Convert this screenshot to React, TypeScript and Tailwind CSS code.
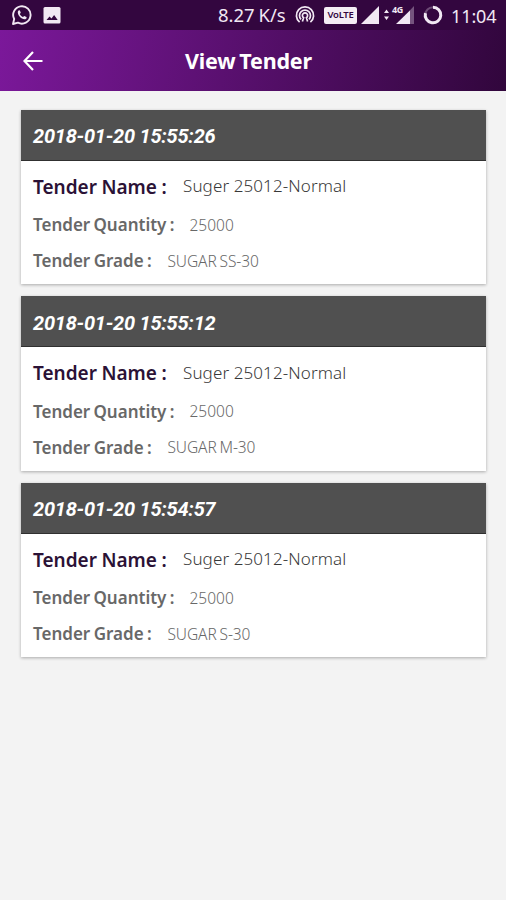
interface Tender {
  date: string;
  name: string;
  quantity: string;
  grade: string;
}

const tenders: Tender[] = [
  { date: '2018-01-20 15:55:26', name: 'Suger 25012-Normal', quantity: '25000', grade: 'SUGAR SS-30' },
  { date: '2018-01-20 15:55:12', name: 'Suger 25012-Normal', quantity: '25000', grade: 'SUGAR M-30' },
  { date: '2018-01-20 15:54:57', name: 'Suger 25012-Normal', quantity: '25000', grade: 'SUGAR S-30' },
];

function StatusBar() {
  return (
    <div className="flex h-[30px] items-center bg-[#33063f] pl-3 pr-[9px] text-[#f1e8f3]">
      <svg className="h-5 w-5" viewBox="0 0 20 20" fill="none">
        <path d="M1 19l1.2-5A8.7 8.7 0 1 1 6 17.7z" stroke="currentColor" strokeWidth="1.9" strokeLinejoin="round" />
        <path
          d="M7.2 5.3c-.9.2-1.5 1.1-1.4 2.1.3 3.4 3.5 6.5 6.7 6.8 1.1.1 2-.5 2.1-1.5l-.1-.7-2.3-1.1-1.2 1.2c-1.5-.6-2.6-1.7-3.2-3.1l1-1.2-.9-2.4z"
          fill="currentColor"
        />
      </svg>
      <svg className="ml-[11px] h-[18px] w-[18px]" viewBox="0 0 18 18">
        <rect x=".5" y="1" width="17" height="16.5" rx="1.5" fill="currentColor" />
        <path d="M3.5 14l3-3.6 2 2 2.6-3.4 3.6 5z" fill="#33063f" />
      </svg>

      <span className="ml-auto w-[68px] whitespace-nowrap pt-px text-[18.5px] leading-none [word-spacing:-1px]">8.27 K/s</span>
      <svg className="ml-[9px] h-5 w-5" viewBox="0 0 20 20" fill="none" stroke="currentColor" strokeWidth="1.7">
        <path d="M4.6 17.2a8.6 8.6 0 1 1 10.8 0" />
        <path d="M6 14.4a5.5 5.5 0 1 1 8 0" />
        <path d="M7.4 16.5l1.2-3.8a2.6 2.6 0 1 1 2.8 0l1.2 3.8" />
      </svg>
      <span className="ml-[9px] flex h-[17px] w-[33px] items-center justify-center rounded-[2px] bg-[#f4edf5] text-[9.5px] font-semibold leading-none tracking-[-0.3px] text-[#33063f]">
        VoLTE
      </span>
      <svg className="ml-[4px] h-[18px] w-[18px]" viewBox="0 0 18 18">
        <path d="M18 0v18H0z" fill="currentColor" />
      </svg>
      <svg className="ml-[5px] h-3 w-[5px]" viewBox="0 0 5 12" fill="currentColor">
        <path d="M0 4l2.5-3.5L5 4zM0 7.5h5L2.5 11z" />
      </svg>
      <span className="relative ml-[7px] h-[18px] w-[19px]">
        <svg className="h-[18px] w-[19px]" viewBox="0 0 19 18">
          <path d="M18 0v18H1z" fill="currentColor" opacity=".35" />
          <path d="M14 4.5V18H0z" fill="currentColor" />
        </svg>
        <span className="absolute -left-[4px] -top-px bg-[#33063f] pr-px text-[9px] font-bold leading-[9px] tracking-[-0.5px]">4G</span>
      </span>
      <svg className="ml-[8px] h-5 w-5" viewBox="0 0 20 20" fill="none" stroke="currentColor" strokeWidth="3">
        <circle cx="10" cy="10" r="7.8" opacity=".3" strokeWidth="2" />
        <path d="M10 2.2a7.8 7.8 0 1 1-7.6 6" />
      </svg>
      <span className="ml-2 w-[46px] whitespace-nowrap pt-px text-[18px] leading-none tracking-[-0.1px]">11:04</span>
    </div>
  );
}

function TenderCard({ tender }: { tender: Tender }) {
  return (
    <div className="h-[174.5px] bg-white shadow-[0_1px_3px_rgba(0,0,0,0.3)]">
      <div className="flex h-[51px] items-center border-b border-[#303030] bg-[#505050] pl-3 pt-[3px] font-['Roboto',sans-serif] text-[20px] font-bold italic text-white">
        <span className="tracking-[-0.25px]">{tender.date}</span>
      </div>
      <div className="flex flex-col pl-3 pt-[8.5px]">
        <div className="flex h-9 items-center">
          <span className="w-[150px] whitespace-nowrap text-[19px] font-semibold text-[#2b1236] [word-spacing:-0.5px]">Tender Name :</span>
          <span className="whitespace-nowrap pb-0.5 text-[17px] font-light tracking-[0.1px] text-[#383838]">{tender.name}</span>
        </div>
        <div className="flex h-10 items-center">
          <span className="w-[156.5px] whitespace-nowrap text-[17px] font-semibold text-[#686868] [word-spacing:-1.2px]">Tender Quantity :</span>
          <span className="whitespace-nowrap pt-px text-[15.5px] font-light text-[#686868]">{tender.quantity}</span>
        </div>
        <div className="flex h-8 items-center">
          <span className="w-[134.5px] whitespace-nowrap text-[17px] font-semibold text-[#686868] [word-spacing:-1px]">Tender Grade :</span>
          <span className="whitespace-nowrap pt-px text-[15.5px] font-light tracking-[-0.1px] text-[#686868] [word-spacing:-1px]">{tender.grade}</span>
        </div>
      </div>
    </div>
  );
}

export default function App() {
  return (
    <div className="min-h-screen bg-[#f3f3f3] font-['Noto_Sans',sans-serif]">
      <StatusBar />
      <header className="relative flex h-[61px] items-center justify-center bg-linear-[100deg] from-[#7b189a] to-[#31063c]">
        <svg className="absolute left-[23px] top-[21px] h-5 w-5" viewBox="0 0 20 20" fill="none" stroke="white" strokeWidth="2.2">
          <path d="M10 1L1.5 10 10 19M1.5 10H19.5" />
        </svg>
        <h1 className="mr-[9px] pt-px text-[21.5px] font-bold tracking-[-0.2px] text-white [word-spacing:-1.5px]">View Tender</h1>
      </header>
      <main className="flex flex-col gap-3 pl-[21px] pr-5 pt-[18.5px]">
        {tenders.map((tender) => (
          <TenderCard key={tender.date} tender={tender} />
        ))}
      </main>
    </div>
  );
}
